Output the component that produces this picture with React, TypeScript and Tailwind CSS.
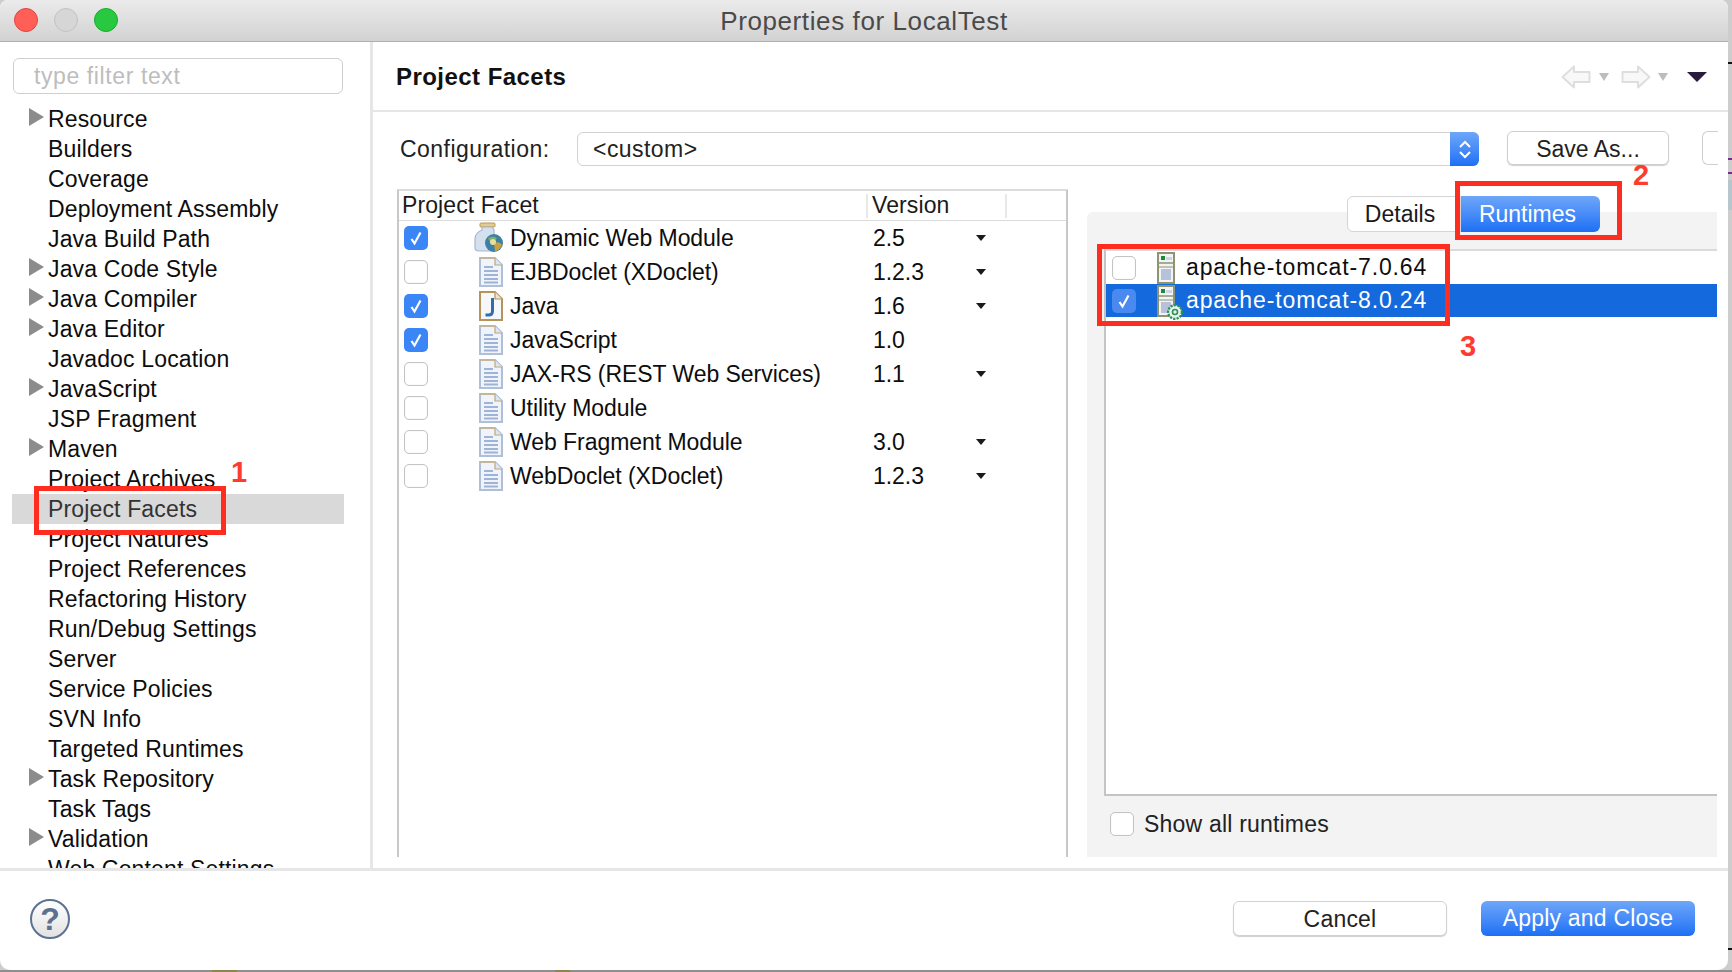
const treeItems: [string, boolean][] = [
  ['Resource', true],
  ['Builders', false],
  ['Coverage', false],
  ['Deployment Assembly', false],
  ['Java Build Path', false],
  ['Java Code Style', true],
  ['Java Compiler', true],
  ['Java Editor', true],
  ['Javadoc Location', false],
  ['JavaScript', true],
  ['JSP Fragment', false],
  ['Maven', true],
  ['Project Archives', false],
  ['Project Facets', false],
  ['Project Natures', false],
  ['Project References', false],
  ['Refactoring History', false],
  ['Run/Debug Settings', false],
  ['Server', false],
  ['Service Policies', false],
  ['SVN Info', false],
  ['Targeted Runtimes', false],
  ['Task Repository', true],
  ['Task Tags', false],
  ['Validation', true],
  ['Web Content Settings', false],
]

const facets: { name: string; version: string; checked: boolean; arrow: boolean; icon: 'web' | 'doc' | 'java' }[] = [
  { name: 'Dynamic Web Module', version: '2.5', checked: true, arrow: true, icon: 'web' },
  { name: 'EJBDoclet (XDoclet)', version: '1.2.3', checked: false, arrow: true, icon: 'doc' },
  { name: 'Java', version: '1.6', checked: true, arrow: true, icon: 'java' },
  { name: 'JavaScript', version: '1.0', checked: true, arrow: false, icon: 'doc' },
  { name: 'JAX-RS (REST Web Services)', version: '1.1', checked: false, arrow: true, icon: 'doc' },
  { name: 'Utility Module', version: '', checked: false, arrow: false, icon: 'doc' },
  { name: 'Web Fragment Module', version: '3.0', checked: false, arrow: true, icon: 'doc' },
  { name: 'WebDoclet (XDoclet)', version: '1.2.3', checked: false, arrow: true, icon: 'doc' },
]

const Checkbox = ({ checked = false, muted = false }: { checked?: boolean; muted?: boolean }) => {
  if (checked) {
    return (
      <span
        className={`flex h-[24px] w-[24px] shrink-0 items-center justify-center rounded-[5px] ${
          muted ? 'bg-[#4a8af0]' : 'bg-[#3b86f7]'
        }`}
      >
        <svg width="14" height="16" viewBox="0 0 14 16" fill="none">
          <path d="M2.5 9 L5.5 13.5 L11.5 2.5" stroke="#fff" strokeWidth="2.2" />
        </svg>
      </span>
    )
  }
  return <span className="block h-[24px] w-[24px] shrink-0 rounded-[5px] border border-[#c4c4c4] bg-white shadow-[inset_0_0_1px_#d8d8d8]" />
}

const DocIcon = () => (
  <svg width="24" height="30" viewBox="0 0 24 30" className="shrink-0">
    <path d="M1 1 H16 L23 8 V29 H1 Z" fill="#f0f3f9" stroke="#adbfd9" strokeWidth="2" />
    <path d="M16 1 V8 H23" fill="#dfe6f0" stroke="#c0a878" strokeWidth="1.2" />
    <path d="M1 1 H16" stroke="#c9b48a" strokeWidth="1.5" />
    <path d="M5 10 H14 M5 14 H19 M5 18 H19 M5 22 H19 M5 25.5 H19" stroke="#9db3d8" strokeWidth="1.8" />
  </svg>
)

const JavaIcon = () => (
  <svg width="24" height="30" viewBox="0 0 24 30" className="shrink-0">
    <path d="M1 1 H16 L23 8 V29 H1 Z" fill="#f6f7fa" stroke="#b6935a" strokeWidth="2" />
    <path d="M16 1 V8 H23" fill="#e9e4d8" stroke="#b6935a" strokeWidth="1.2" />
    <path d="M13.5 7 V20 Q13.5 24 9.5 24 H6.5" fill="none" stroke="#2f6ea8" strokeWidth="3" />
  </svg>
)

const WebIcon = () => (
  <svg width="30" height="32" viewBox="0 0 30 32" className="-ml-[4px] shrink-0">
    <rect x="6" y="1" width="15" height="4" rx="1" fill="#e6cc8a" stroke="#b79a55" strokeWidth="1" />
    <path d="M8 5 V8 Q1 11 1 17 V26 Q1 29 5 29 H20 V8 L18 5 Z" fill="#d5e0ef" stroke="#a7b7cf" strokeWidth="1.2" />
    <circle cx="20" cy="21" r="9" fill="#3d7fa6" />
    <path d="M14 16 Q19 13 23 16 Q20 21 16 20 Z" fill="#76b06a" />
    <path d="M20 21 Q26 19 28 23 Q25 29 21 29 Z" fill="#c6a340" />
    <circle cx="19" cy="20" r="3" fill="#e9df9a" />
  </svg>
)

const ServerIcon = ({ gear = false }: { gear?: boolean }) => (
  <span className="relative block h-[32px] w-[18px] shrink-0">
    <svg width="18" height="32" viewBox="0 0 18 32">
      <rect x="1" y="1" width="16" height="30" fill="#f1f3f6" stroke="#8d9470" strokeWidth="2" />
      <rect x="4" y="4" width="4" height="4" fill="#1d8a3a" />
      <rect x="9" y="5" width="6" height="3" fill="#cdd5e4" />
      <path d="M2 11 H16" stroke="#8d9470" strokeWidth="1.5" />
      <rect x="4" y="17" width="10" height="11" fill="#b7c2da" />
      <path d="M2 15 H16" stroke="#8d9470" strokeWidth="1" />
    </svg>
    {gear && (
      <svg width="16" height="16" viewBox="0 0 14 14" className="absolute -right-[8px] bottom-[-3px]">
        <circle cx="7" cy="7" r="6" fill="#e8f3ea" stroke="#2e8f5b" strokeWidth="2" strokeDasharray="2 1" />
        <circle cx="7" cy="7" r="2.2" fill="none" stroke="#2e8f5b" strokeWidth="1.4" />
      </svg>
    )}
  </span>
)

const SmallArrow = () => <span className="h-0 w-0 border-x-[5px] border-t-[6px] border-x-transparent border-t-[#1a1a1a]" />

const FacetIcon = ({ type }: { type: 'web' | 'doc' | 'java' }) => {
  if (type === 'web') return <WebIcon />
  if (type === 'java') return <JavaIcon />
  return <DocIcon />
}

const NavArrow = ({ flip = false }: { flip?: boolean }) => (
  <svg width="30" height="24" viewBox="0 0 30 24" className={flip ? '-scale-x-100' : ''}>
    <path d="M1.5 12 L13 1.5 V7 H28.5 V17 H13 V22.5 Z" fill="#f8f8f8" stroke="#dedede" strokeWidth="2" strokeLinejoin="round" />
  </svg>
)

const Sidebar = () => (
  <aside className="flex h-full w-[373px] shrink-0 flex-col overflow-hidden border-r-[3px] border-[#e6e6e6]">
    <div className="mx-[13px] mt-[16px] mb-[10px] flex h-[36px] w-[330px] shrink-0 items-center rounded-[6px] border border-[#cfcfcf] pl-[20px] text-[23px] tracking-[0.6px] text-[#bdbdbd]">
      type filter text
    </div>
    <ul className="text-[23px] tracking-[0.15px] text-[#0d0d0d]">
      {treeItems.map(([label, expandable]) => {
        const selected = label === 'Project Facets'
        return (
          <li
            key={label}
            className={`ml-[12px] flex h-[30px] w-[332px] items-center pl-[17px] ${selected ? 'bg-[#d9d9d9] text-[#333]' : ''}`}
          >
            <span className="w-[19px] shrink-0">
              {expandable && (
                <span className="mb-[4px] block h-0 w-0 border-y-[9px] border-l-[15px] border-y-transparent border-l-[#8c8c8c]" />
              )}
            </span>
            <span className="whitespace-nowrap">{label}</span>
          </li>
        )
      })}
    </ul>
  </aside>
)

const FacetTable = () => (
  <div className="h-[668px] w-[671px] shrink-0 border-x-2 border-t-2 border-[#c8c8c8] border-t-[#dcdcdc]">
    <div className="flex h-[30px] items-center border-b border-[#dcdcdc] text-[23px] tracking-[0.1px] text-[#1a1a1a]">
      <span className="w-[467px] pl-[3px]">Project Facet</span>
      <span className="flex h-[24px] w-[141px] items-center border-x-2 border-[#e8e8e8] pl-[4px]">Version</span>
    </div>
    <ul className="text-[23px] tracking-[-0.05px] text-[#0d0d0d]">
      {facets.map((f) => (
        <li key={f.name} className="flex h-[34px] items-center">
          <span className="ml-[5px] w-[68px]">
            <Checkbox checked={f.checked} />
          </span>
          <span className="flex w-[38px] shrink-0 justify-center">
            <FacetIcon type={f.icon} />
          </span>
          <span className="w-[359px] whitespace-nowrap">{f.name}</span>
          <span className="ml-[4px] w-[103px]">{f.version}</span>
          {f.arrow && <SmallArrow />}
        </li>
      ))}
    </ul>
  </div>
)

const RuntimesPanel = () => (
  <div className="relative mt-[23px] ml-[19px] flex h-[645px] w-[630px] shrink-0 flex-col rounded-tl-[6px] bg-[#f3f3f3] pl-[17px]">
    <div className="absolute -top-[16px] left-[260px] flex h-[36px] text-[23px]">
      <span className="flex w-[114px] items-center justify-center rounded-l-[6px] border border-[#d4d4d4] bg-white pr-[8px] text-[#1a1a1a]">
        Details
      </span>
      <span className="flex w-[139px] items-center justify-center rounded-r-[6px] bg-gradient-to-b from-[#6ea6f9] to-[#1a6ff5] pr-[6px] text-white">
        Runtimes
      </span>
    </div>
    <div className="mt-[37px] h-[547px] w-full shrink-0 border-t-2 border-b-2 border-l-2 border-[#c4c4c4] border-t-[#dadada] bg-white">
      <div className="flex h-[33px] items-center pl-[6px] text-[23px] tracking-[0.87px] text-[#0d0d0d]">
        <span className="w-[45px]">
          <Checkbox />
        </span>
        <ServerIcon />
        <span className="ml-[11px] whitespace-nowrap">apache-tomcat-7.0.64</span>
      </div>
      <div className="flex h-[33px] items-center bg-[#1469dc] pl-[6px] text-[23px] tracking-[0.87px] text-white">
        <span className="w-[45px]">
          <Checkbox checked muted />
        </span>
        <ServerIcon gear />
        <span className="ml-[11px] whitespace-nowrap">apache-tomcat-8.0.24</span>
      </div>
    </div>
    <div className="flex flex-1 items-center gap-[10px] pb-[5px] text-[23px] tracking-[0.2px] text-[#222]">
      <span className="ml-[6px]">
        <Checkbox />
      </span>
      Show all runtimes
    </div>
  </div>
)

const Content = () => (
  <section className="flex h-full min-w-0 flex-1 flex-col">
    <header className="flex h-[70px] shrink-0 items-center border-b-2 border-[#e6e6e6] pt-[2px] pr-[21px] pl-[23px]">
      <h1 className="text-[24px] font-bold tracking-[0.45px] text-[#111]">Project Facets</h1>
      <div className="ml-auto flex items-center">
        <NavArrow />
        <span className="mr-[12px] ml-[8px] h-0 w-0 border-x-[5px] border-t-[8px] border-x-transparent border-t-[#bdbdbd]" />
        <NavArrow flip />
        <span className="ml-[7px] h-0 w-0 border-x-[5px] border-t-[8px] border-x-transparent border-t-[#bdbdbd]" />
        <span className="ml-[19px] h-0 w-0 border-x-[10px] border-t-[10px] border-x-transparent border-t-[#2a1b3d]" />
      </div>
    </header>
    <div className="flex h-[74px] shrink-0 items-center pl-[27px]">
      <span className="w-[177px] text-[23px] tracking-[0.45px] text-[#222]">Configuration:</span>
      <div className="flex h-[34px] w-[902px] items-center rounded-[6px] border border-[#d2d2d2] bg-white pl-[15px] text-[23px] tracking-[0.45px] text-[#222]">
        <span className="flex-1">&lt;custom&gt;</span>
        <span className="-mr-px flex h-[34px] w-[29px] flex-col items-center justify-center gap-[3px] rounded-r-[6px] bg-gradient-to-b from-[#6ea6f9] to-[#1a6ff5]">
          <svg width="14" height="8" viewBox="0 0 14 8" fill="none">
            <path d="M2 7 L7 2 L12 7" stroke="#fff" strokeWidth="2" />
          </svg>
          <svg width="14" height="8" viewBox="0 0 14 8" fill="none">
            <path d="M2 1 L7 6 L12 1" stroke="#fff" strokeWidth="2" />
          </svg>
        </span>
      </div>
      <button className="-mt-[2px] ml-[28px] h-[34px] w-[162px] rounded-[6px] border border-[#cfcfcf] bg-white text-[23px] text-[#222] shadow-[0_1px_1px_#d0d0d0]">
        Save As...
      </button>
      <span className="-mt-[2px] ml-[33px] h-[34px] w-[16px] rounded-l-[6px] border-y border-l border-[#cfcfcf] bg-white" />
    </div>
    <div className="flex min-h-0 flex-1 pt-[3px] pl-[24px]">
      <FacetTable />
      <RuntimesPanel />
    </div>
  </section>
)

const Annotations = () => (
  <>
    <div className="absolute top-[486px] left-[34px] h-[49px] w-[192px] border-[5px] border-[#ff2d20]" />
    <div className="absolute top-[181px] left-[1455px] h-[59px] w-[167px] border-[5px] border-[#ff2d20]" />
    <div className="absolute top-[244px] left-[1097px] h-[82px] w-[353px] border-[5px] border-[#ff2d20]" />
    <span className="absolute top-[451px] left-[231px] text-[29px] font-bold text-[#ff3b30]">1</span>
    <span className="absolute top-[154px] left-[1633px] text-[29px] font-bold text-[#ff3b30]">2</span>
    <span className="absolute top-[325px] left-[1460px] text-[29px] font-bold text-[#ff3b30]">3</span>
  </>
)

// bits of the desktop that show around the window edge
const Backdrop = () => (
  <>
    <span className="absolute top-[62px] left-[1728px] h-[2px] w-[4px] bg-[#111]" />
    <span className="absolute top-[158px] left-[1728px] h-[2px] w-[4px] bg-[#7a2a8a]" />
    <span className="absolute top-[172px] left-[1728px] h-[2px] w-[4px] bg-[#7a2a8a]" />
    <span className="absolute top-[180px] left-[1728px] h-[30px] w-[4px] bg-[#b7c6cc]" />
    <span className="absolute top-[948px] left-[1728px] h-[2px] w-[4px] bg-[#111]" />
    <span className="absolute bottom-0 left-0 h-[2px] w-full bg-[#8e8e8e]" />
    <span className="absolute bottom-0 left-[212px] h-[2px] w-[25px] bg-[#8d8550]" />
    <span className="absolute bottom-0 left-[555px] h-[2px] w-[15px] bg-[#8d8550]" />
  </>
)

const App = () => {
  return (
    <div className="relative h-[972px] w-[1732px] overflow-hidden bg-[#cdcdcd] font-['Liberation_Sans',Arial,sans-serif]">
      <Backdrop />
      <div className="relative flex h-[970px] w-[1728px] flex-col overflow-hidden rounded-t-[8px] rounded-b-[10px] bg-white">
        <div className="relative flex h-[42px] shrink-0 items-center justify-center border-b border-[#b0b0b0] bg-gradient-to-b from-[#ebebeb] to-[#d2d2d2] pt-[1px]">
          <div className="absolute top-[8px] left-[14px] flex gap-[16px]">
            <span className="h-[24px] w-[24px] rounded-full border border-[#e0443e] bg-[#ff5f57]" />
            <span className="h-[24px] w-[24px] rounded-full border border-[#c2c2c2] bg-[#d6d6d6]" />
            <span className="h-[24px] w-[24px] rounded-full border border-[#1aab29] bg-[#28c940]" />
          </div>
          <span className="text-[26px] tracking-[0.6px] text-[#4a4a4a]">Properties for LocalTest</span>
        </div>
        <div className="flex h-[826px] shrink-0">
          <Sidebar />
          <Content />
        </div>
        <footer className="flex flex-1 items-center justify-between border-t-[3px] border-[#e6e6e6] pr-[33px] pb-[4px] pl-[30px]">
          <span className="flex h-[40px] w-[40px] items-center justify-center rounded-full border-2 border-[#5a7190] bg-gradient-to-b from-white to-[#e2e2e2] text-[32px] font-bold text-[#5a7190]">
            ?
          </span>
          <div className="flex gap-[34px] text-[23px] tracking-[0.2px]">
            <button className="h-[35px] w-[214px] rounded-[6px] border border-[#d2d2d2] bg-white text-[#222] shadow-[0_1px_1px_#cfcfcf]">
              Cancel
            </button>
            <button className="h-[35px] w-[214px] rounded-[6px] bg-gradient-to-b from-[#6ea6f9] to-[#1a6ff5] text-white">
              Apply and Close
            </button>
          </div>
        </footer>
      </div>
      <Annotations />
    </div>
  )
}

export default App
